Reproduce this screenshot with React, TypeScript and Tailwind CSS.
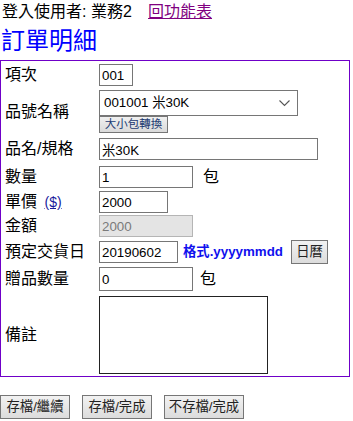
import React from "react";

const inputCls =
  "h-[22px] border border-[#767676] bg-white px-[2px] text-[13.33px] text-black outline-none";

const Row = ({
  label,
  className = "",
  children,
}: {
  label: React.ReactNode;
  className?: string;
  children: React.ReactNode;
}) => (
  <div className={`flex items-center ${className}`}>
    <div className="w-[94px] shrink-0 text-[16px] leading-[20px]">{label}</div>
    <div className="flex items-center">{children}</div>
  </div>
);

const Btn = ({ children, className = "" }: { children: React.ReactNode; className?: string }) => (
  <button
    className={`h-[24px] border border-[#767676] bg-gradient-to-b from-[#f2f2f2] to-[#dcdcdc] text-[13.33px] text-[#222] ${className}`}
  >
    {children}
  </button>
);

export default function App() {
  return (
    <div className="min-h-screen bg-white font-['Liberation_Sans','Noto_Sans_CJK_TC',sans-serif] text-black">
      {/* header */}
      <div className="flex h-[22px] items-end pl-[2px] text-[16px] leading-[20px]">
        <span className="w-[146px]">登入使用者: 業務2</span>
        <a href="#" className="text-[#800080] underline">
          回功能表
        </a>
      </div>
      <h1 className="pl-[1px] text-[24px] leading-[38px] text-[#0000ff]">訂單明細</h1>

      {/* form box */}
      <div className="w-[350px] border border-[#6f00c8] pl-[4px] pb-[2px]">
        <Row label="項次" className="mt-[3px]">
          <input readOnly value="001" className={`${inputCls} w-[34px]`} />
        </Row>

        <Row label="品號名稱" className="mt-[4px]">
          <div className="flex flex-col items-start">
            <div className="relative h-[26px] w-[199px] border border-[#767676] bg-white">
              <span className="absolute left-[4px] top-[3px] text-[13.33px] leading-[18px]">
                001001 米30K
              </span>
              <svg
                className="absolute right-[7px] top-[9px]"
                width="11"
                height="7"
                viewBox="0 0 11 7"
                fill="none"
              >
                <path d="M0.5 0.5 L5.5 5.5 L10.5 0.5" stroke="#555" strokeWidth="1.1" />
              </svg>
            </div>
            <button className="h-[17px] w-[69px] border border-[#767676] bg-gradient-to-b from-[#f0f0f0] to-[#dadada] text-[11.5px] leading-[15px] text-[#233b73]">
              大小包轉換
            </button>
          </div>
        </Row>

        <Row label="品名/規格" className="mt-[5px]">
          <input readOnly value="米30K" className={`${inputCls} w-[219px]`} />
        </Row>

        <Row label="數量" className="mt-[5px]">
          <input readOnly value="1" className={`${inputCls} w-[94px]`} />
          <span className="ml-[10px] text-[16px]">包</span>
        </Row>

        <Row
          label={
            <>
              單價{" "}
              <a href="#" className="ml-[3px] text-[14px] text-[#1a1a9c] underline">
                ($)
              </a>
            </>
          }
          className="mt-[2px]"
        >
          <input readOnly value="2000" className={`${inputCls} w-[69px]`} />
        </Row>

        <Row label="金額" className="mt-[2px]">
          <input
            readOnly
            value="2000"
            className="h-[22px] w-[94px] border border-[#b5b5b5] bg-[#e4e4e4] px-[2px] text-[13.33px] text-[#7a7a7a] outline-none"
          />
        </Row>

        <Row label="預定交貨日" className="mt-[3px]">
          <input readOnly value="20190602" className={`${inputCls} w-[79px]`} />
          <span className="ml-[5px] text-[13.33px] font-bold text-[#1010ee]">格式.yyyymmdd</span>
          <Btn className="ml-[8px] h-[20px] w-[37px] leading-[18px]">日曆</Btn>
        </Row>

        <Row label="贈品數量" className="mt-[3px]">
          <input readOnly value="0" className={`${inputCls} h-[24px] w-[94px]`} />
          <span className="ml-[7px] text-[16px]">包</span>
        </Row>

        <Row label="備註" className="mt-[5px]">
          <textarea className="h-[78px] w-[169px] resize-none border border-[#222] bg-white outline-none" />
        </Row>
      </div>

      {/* actions */}
      <div className="mt-[18px] flex gap-[12px]">
        <Btn className="w-[70px]">存檔/繼續</Btn>
        <Btn className="w-[70px]">存檔/完成</Btn>
        <Btn className="w-[80px]">不存檔/完成</Btn>
      </div>
    </div>
  );
}
